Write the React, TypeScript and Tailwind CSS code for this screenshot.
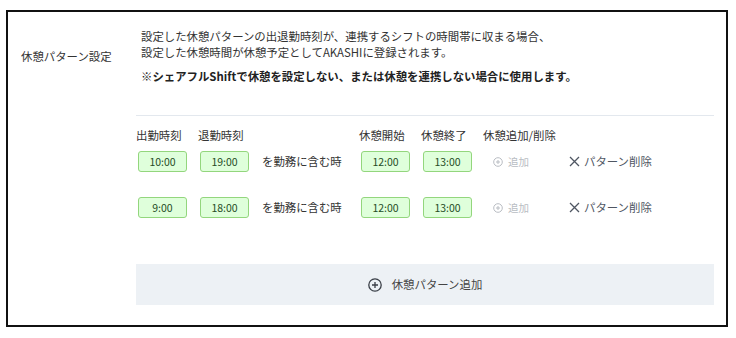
import React from "react";

const font = { fontFamily: '"Noto Sans CJK JP", "Noto Sans", sans-serif' };

const cols = "grid grid-cols-[62px_64px_97px_62px_62px_86px_1fr] items-center";

const patterns = [
  { start: "10:00", end: "19:00", breakStart: "12:00", breakEnd: "13:00" },
  { start: "9:00", end: "18:00", breakStart: "12:00", breakEnd: "13:00" },
];

const TimeBox = ({ value }: { value: string }) => (
  <div className="ml-[2px] flex h-[21px] w-[49px] items-center justify-center rounded-[3px] border border-[#93d67d] bg-[#dfffdb] text-[10.5px] text-[#264d26]">
    {value}
  </div>
);

const SmallPlus = () => (
  <svg width="10" height="10" viewBox="0 0 10 10" fill="none">
    <circle cx="5" cy="5" r="4.3" stroke="#b9bdc3" strokeWidth="1" />
    <path d="M5 3v4M3 5h4" stroke="#b9bdc3" strokeWidth="1" />
  </svg>
);

const Cross = () => (
  <svg width="11" height="11" viewBox="0 0 11 11" fill="none">
    <path d="M1 1l9 9M10 1l-9 9" stroke="#4f5662" strokeWidth="1.3" />
  </svg>
);

const BigPlus = () => (
  <svg width="14" height="14" viewBox="0 0 14 14" fill="none">
    <circle cx="7" cy="7" r="6.2" stroke="#3a3f47" strokeWidth="1.3" />
    <path d="M7 4v6M4 7h6" stroke="#3a3f47" strokeWidth="1.3" />
  </svg>
);

export default function App() {
  return (
    <div className="min-h-[338px] bg-white pl-[6px] pt-[10px]" style={font}>
      <div className="flex h-[317px] w-[722px] border-2 border-[#111]">
        <div className="w-[128px] shrink-0 pl-[13px] pt-[36px] text-[11.4px] leading-[16px] text-[#333]">
          休憩パターン設定
        </div>

        <div className="flex-1 pr-[12px] pt-[16px]">
          <div className="pl-[5px] text-[11.4px] leading-[16px] text-[#333]">
            <p>設定した休憩パターンの出退勤時刻が、連携するシフトの時間帯に収まる場合、</p>
            <p>設定した休憩時間が休憩予定としてAKASHIに登録されます。</p>
            <p className="mt-[8px] font-bold text-[#222]">
              ※シェアフルShiftで休憩を設定しない、または休憩を連携しない場合に使用します。
            </p>
          </div>

          <div className="mt-[31px] h-px bg-[#e3e8ee]" />

          <div className={`${cols} mt-[11px] text-[11.4px] leading-[16px] text-[#333]`}>
            <span>出勤時刻</span>
            <span>退勤時刻</span>
            <span />
            <span>休憩開始</span>
            <span>休憩終了</span>
            <span className="col-span-2">休憩追加/削除</span>
          </div>

          <div className="mt-[8px] flex flex-col gap-[25px]">
            {patterns.map((p, i) => (
              <div key={i} className={`${cols} h-[21px] text-[11.4px] text-[#333]`}>
                <TimeBox value={p.start} />
                <TimeBox value={p.end} />
                <span>を勤務に含む時</span>
                <TimeBox value={p.breakStart} />
                <TimeBox value={p.breakEnd} />
                <span className="ml-[10px] flex items-center gap-[5px] text-[10.5px] text-[#b9bdc3]">
                  <SmallPlus />
                  追加
                </span>
                <span className="flex items-center gap-[4px] text-[#4f5662]">
                  <Cross />
                  パターン削除
                </span>
              </div>
            ))}
          </div>

          <button className="mt-[46px] flex h-[41px] w-full items-center justify-center gap-[10px] bg-[#edf1f5] text-[11.4px] text-[#444]">
            <BigPlus />
            休憩パターン追加
          </button>
        </div>
      </div>
    </div>
  );
}
